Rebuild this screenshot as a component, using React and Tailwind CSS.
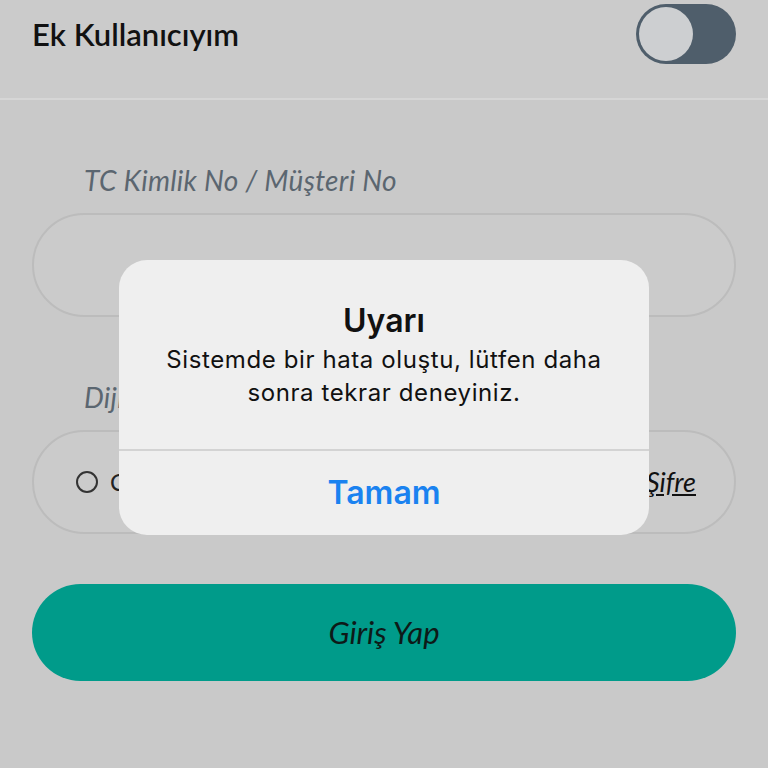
import { useState } from 'react';

const appFont = { fontFamily: '"Lato", "Open Sans", sans-serif' };

const App = () => {
    const [extraUser, setExtraUser] = useState(false);

    return (
        <div className="relative w-full h-[768px] overflow-hidden bg-[#c9c9c9]" style={appFont}>
            {/* header row */}
            <div className="h-[100px] bg-[#cbcbcb] border-b-2 border-[#d6d6d6]">
                <div className="h-[68px] px-8 flex items-center justify-between">
                    <span className="text-[31px] font-semibold text-[#111]">Ek Kullanıcıyım</span>
                    <button
                        type="button"
                        onClick={() => setExtraUser(!extraUser)}
                        className="w-[100px] h-[60px] rounded-full bg-[#4f5e6b] p-[3px] flex items-center"
                    >
                        <span className="block w-[54px] h-[54px] rounded-full bg-[#cdcfd1]" />
                    </button>
                </div>
            </div>

            <div className="px-8">
                <p className="mt-[64px] pl-[52px] text-[28px] leading-[32px] tracking-[0.3px] italic text-[#5b6670]">TC Kimlik No / Müşteri No</p>
                <div className="mt-[17px] h-[104px] rounded-full border-2 border-[#bcbcbc] bg-[#cbcbcb]" />

                <p className="mt-[64px] pl-[52px] text-[28px] leading-[32px] tracking-[0.3px] italic text-[#5b6670]">Dijital Şifre</p>
                <div className="mt-[17px] h-[104px] rounded-full border-2 border-[#bcbcbc] bg-[#cbcbcb] flex items-center justify-between pl-[42px] pr-[38px]">
                    <div className="flex items-center gap-3">
                        <span className="w-[22px] h-[22px] rounded-full border-2 border-[#333]" />
                        <span className="text-[24px] text-[#222]">Cihazımı Hatırla</span>
                    </div>
                    <span className="text-[27px] italic underline text-[#111]">Geçici Şifre</span>
                </div>

                <button type="button" className="mt-[50px] w-full h-[97px] rounded-full bg-[#009b8a] text-[31px] italic text-[#0d1a18]">
                    Giriş Yap
                </button>
            </div>

            {/* alert */}
            <div
                className="absolute left-[119px] top-[260px] w-[530px] h-[275px] rounded-[28px] bg-[#efefef] flex flex-col"
                style={{ fontFamily: 'Inter, Roboto, sans-serif' }}
            >
                <div className="h-[189px] pt-[43px] px-[36px] text-center text-[#111]">
                    <h3 className="text-[32px] leading-[36px] font-semibold">Uyarı</h3>
                    <p className="mt-[4px] text-[24px] leading-[33px] tracking-[0.6px]">Sistemde bir hata oluştu, lütfen daha sonra tekrar deneyiniz.</p>
                </div>
                <div className="flex-1 border-t-2 border-[#d3d3d3] flex items-center justify-center">
                    <span className="text-[32px] font-semibold text-[#1a82f0]">Tamam</span>
                </div>
            </div>
        </div>
    );
};

export default App;
